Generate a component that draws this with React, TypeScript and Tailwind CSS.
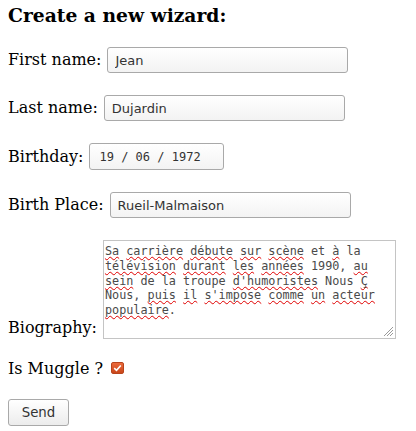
import React from "react";

const serif = { fontFamily: '"DejaVu Serif", serif' };

function W({ children }: { children: React.ReactNode }) {
  return (
    <span className="underline decoration-wavy decoration-[#e00000] decoration-1 underline-offset-[1px] [text-decoration-skip-ink:none]">
      {children}
    </span>
  );
}

const boxCls =
  "h-[26px] rounded-[3px] border border-[#a9a9a9] bg-linear-to-b from-white to-[#f3f3f3] text-[#333] outline-none";
const sansInput = `${boxCls} w-[241px] px-[7px] text-[13px] font-['DejaVu_Sans',sans-serif]`;

export default function App() {
  return (
    <div className="w-[416px] h-[431px] bg-white pl-[8px] text-black" style={serif}>
      <h3 className="pt-[4px] text-[18.72px] font-bold leading-[22px] font-['DejaVu_Serif',serif]">
        Create a new wizard:
      </h3>

      <div className="mt-[21px] flex items-center gap-[6px] text-[16px]">
        <span>First name:</span>
        <input className={sansInput} readOnly defaultValue="Jean" />
      </div>

      <div className="mt-[22px] flex items-center gap-[6px] text-[16px]">
        <span>Last name:</span>
        <input className={sansInput} readOnly defaultValue="Dujardin" />
      </div>

      <div className="mt-[22px] flex items-center gap-[6px] text-[16px]">
        <span>Birthday:</span>
        <input
          className="h-[27px] w-[135px] rounded-[3px] border border-[#a9a9a9] bg-linear-to-b from-white to-[#f3f3f3] pl-[9px] text-[12px] text-[#333] outline-none font-['DejaVu_Sans_Mono',monospace]"
          readOnly
          defaultValue="19 / 06 / 1972"
        />
      </div>

      <div className="mt-[22px] flex items-center gap-[6px] text-[16px]">
        <span>Birth Place:</span>
        <input className={sansInput} readOnly defaultValue="Rueil-Malmaison" />
      </div>

      <div className="mt-[22px] flex items-end gap-[6px] text-[16px]">
        <span className="mb-[-1px]">Biography:</span>
        <div className="relative h-[99px] w-[293px] border border-[#c4c4c4] bg-white px-[1px] py-[3px] text-[11.8px] leading-[14.75px] text-[#4a4a4a] whitespace-pre font-['DejaVu_Sans_Mono',monospace]">
          <div>
            <W>Sa</W> <W>carrière</W> <W>débute</W> <W>sur</W> <W>scène</W> et <W>à</W> la
          </div>
          <div>
            <W>télévision</W> <W>durant</W> <W>les</W> <W>années</W> 1990, <W>au</W>
          </div>
          <div>
            <W>sein</W> de la troupe <W>d'humoristes</W> Nous <W>Ç</W>
          </div>
          <div>
            Nous, <W>puis</W> <W>il</W> <W>s'impose</W> <W>comme</W> <W>un</W> <W>acteur</W>
          </div>
          <div>
            <W>populaire</W>.
          </div>
          <svg className="absolute right-[1px] bottom-[1px]" width="12" height="12" viewBox="0 0 12 12">
            <path d="M11 2 L2 11 M11 5 L5 11 M11 8 L8 11" stroke="#9a9a9a" strokeWidth="1" />
          </svg>
        </div>
      </div>

      <div className="mt-[18px] flex items-center text-[16px]">
        <span>Is Muggle ?</span>
        <span className="ml-[8px] mt-[-2px] flex h-[12px] w-[13px] items-center justify-center rounded-[2px] border border-[#b8441c] bg-linear-to-b from-[#ec6a3a] to-[#c9461a]">
          <svg width="9" height="8" viewBox="0 0 9 8">
            <path d="M1.2 4.2 L3.5 6.3 L7.8 1.5" fill="none" stroke="white" strokeWidth="1.6" />
          </svg>
        </span>
      </div>

      <button className="mt-[18px] h-[27px] w-[61px] rounded-[3px] border border-[#a9a9a9] bg-linear-to-b from-white to-[#ececec] text-[13.33px] text-[#333] font-['DejaVu_Sans',sans-serif]">
        Send
      </button>
    </div>
  );
}
